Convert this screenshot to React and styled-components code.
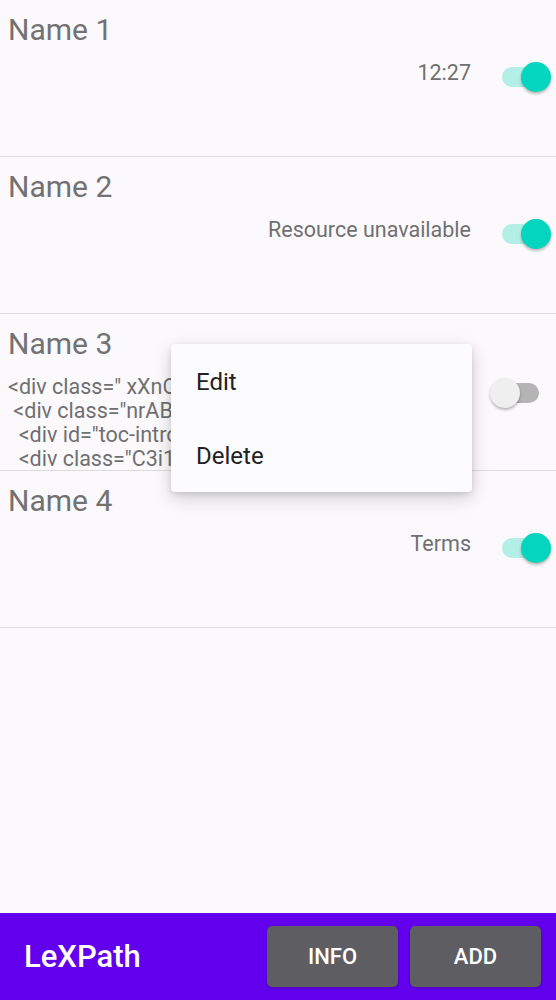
import React from "react";
import styled, { createGlobalStyle } from "styled-components";

const Global = createGlobalStyle`
  html, body { margin: 0; padding: 0; height: 100%; }
  body { background: #fbf9fc; font-family: Roboto, "Noto Sans", sans-serif; }
  #root { height: 100%; }
`;

const Screen = styled.div`
  height: 1000px;
  display: flex;
  flex-direction: column;
  position: relative;
  background: #fbf9fc;
  overflow: hidden;
`;

const List = styled.div`
  flex: 1;
  display: flex;
  flex-direction: column;
`;

const Row = styled.div`
  height: 157px;
  box-sizing: border-box;
  border-bottom: 1px solid #dcdadd;
  display: flex;
  flex-direction: column;
  padding: 12px 0 0 8px;
  overflow: hidden;
`;

const Name = styled.div`
  font-size: 30px;
  line-height: 36px;
  color: #727272;
  height: 36px;
`;

const Body = styled.div`
  display: flex;
  align-items: flex-start;
  margin-top: 13px;
`;

const Detail = styled.div`
  flex: 1;
  font-size: 21.5px;
  line-height: 24px;
  color: #707070;
  text-align: ${(p) => (p.$code ? "left" : "right")};
  white-space: pre;
  overflow: hidden;
`;

const SwitchBox = styled.div`
  width: 85px;
  flex: none;
  height: 32px;
  position: relative;
  margin-top: ${(p) => (p.$code ? "2px" : "0")};
`;

const Track = styled.div`
  position: absolute;
  left: 31px;
  top: 6px;
  width: 37px;
  height: 20px;
  border-radius: 10px;
  background: ${(p) => (p.$on ? "#b3efe6" : "#b4b4b4")};
`;

const Thumb = styled.div`
  position: absolute;
  top: 1px;
  left: ${(p) => (p.$on ? "50px" : "19px")};
  width: 30px;
  height: 30px;
  border-radius: 50%;
  background: ${(p) => (p.$on ? "#03d5be" : "#efefef")};
  box-shadow: 0 2px 3px rgba(0, 0, 0, 0.28);
`;

const Menu = styled.div`
  position: absolute;
  left: 171px;
  top: 344px;
  width: 301px;
  height: 148px;
  box-sizing: border-box;
  padding-top: 1px;
  background: #fcfbfd;
  border-radius: 4px;
  box-shadow: 0 6px 18px rgba(0, 0, 0, 0.18), 0 2px 5px rgba(0, 0, 0, 0.1);
  display: flex;
  flex-direction: column;
`;

const MenuItem = styled.div`
  height: 74px;
  flex: none;
  display: flex;
  align-items: center;
  padding-left: 25px;
  font-size: 24px;
  color: #212121;
`;

const Bar = styled.div`
  height: 87px;
  flex: none;
  background: #6200ee;
  display: flex;
  align-items: center;
  padding: 0 15px 0 24px;
`;

const Title = styled.div`
  flex: 1;
  color: #ffffff;
  font-size: 31px;
  font-weight: 500;
`;

const Button = styled.div`
  width: 131px;
  height: 61px;
  border-radius: 5px;
  background: #5e5d62;
  color: #ffffff;
  display: flex;
  align-items: center;
  justify-content: center;
  font-size: 22px;
  font-weight: 500;
  margin-left: 12px;
  box-shadow: 0 1px 3px rgba(0, 0, 0, 0.25);
`;

const Toggle = ({ on, code }) => (
  <SwitchBox $code={code}>
    <Track $on={on} />
    <Thumb $on={on} />
  </SwitchBox>
);

const code = `<div class=" xXnOcd-content-wrapper">
 <div class="nrABcd-item">
  <div id="toc-introduction">
  <div class="C3i1xyz-item">`;

const items = [
  { name: "Name 1", detail: "12:27", on: true },
  { name: "Name 2", detail: "Resource unavailable", on: true },
  { name: "Name 3", detail: code, on: false, code: true },
  { name: "Name 4", detail: "Terms", on: true },
];

export default function App() {
  return (
    <>
      <Global />
      <Screen>
        <List>
          {items.map((it) => (
            <Row key={it.name}>
              <Name>{it.name}</Name>
              <Body>
                <Detail $code={it.code}>{it.detail}</Detail>
                <Toggle on={it.on} code={it.code} />
              </Body>
            </Row>
          ))}
        </List>
        <Bar>
          <Title>LeXPath</Title>
          <Button>INFO</Button>
          <Button>ADD</Button>
        </Bar>
        <Menu>
          <MenuItem>Edit</MenuItem>
          <MenuItem>Delete</MenuItem>
        </Menu>
      </Screen>
    </>
  );
}
